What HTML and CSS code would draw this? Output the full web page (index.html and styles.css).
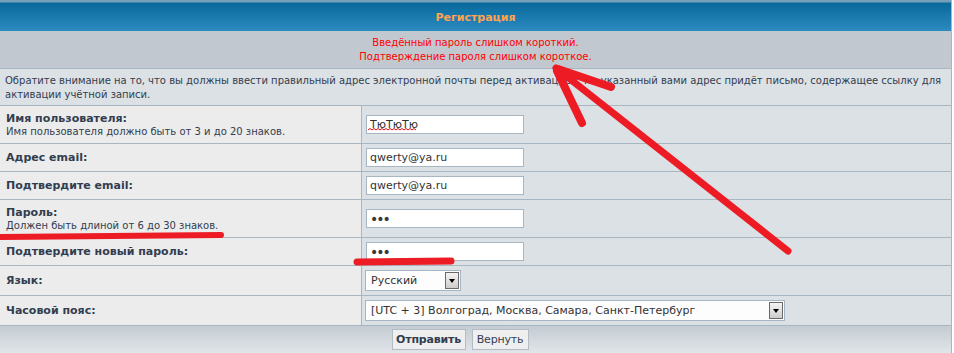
FILE: index.html
```html
<!DOCTYPE html>
<html lang="ru">
<head>
  <meta charset="UTF-8" />
  <meta name="viewport" content="width=device-width, initial-scale=1.0"/>
  <title>Регистрация</title>
  <link rel="stylesheet" href="styles.css">
</head>
<body>
<div class="page">

  <form class="forumline" onsubmit="return false;">
    <div class="thead">Регистрация</div>

    <div class="row-error">
      Введённый пароль слишком короткий.<br>
      Подтверждение пароля слишком короткое.
    </div>

    <div class="row-notice">
      Обратите внимание на то, что вы должны ввести правильный адрес электронной почты перед активацией. На указанный вами адрес придёт письмо, содержащее ссылку для<br>
      активации учётной записи.
    </div>

    <!-- имя пользователя -->
    <div class="field field-tall">
      <div class="field-label">
        <b>Имя пользователя:</b>
        <span class="explain">Имя пользователя должно быть от 3 и до 20 знаков.</span>
      </div>
      <div class="field-input"><input type="text" class="inputbox" value="ТюТюТю"></div>
    </div>

    <div class="field">
      <div class="field-label"><b>Адрес email:</b></div>
      <div class="field-input"><input type="text" class="inputbox" value="qwerty@ya.ru"></div>
    </div>

    <div class="field">
      <div class="field-label"><b>Подтвердите email:</b></div>
      <div class="field-input"><input type="text" class="inputbox" value="qwerty@ya.ru"></div>
    </div>

    <div class="field field-tall">
      <div class="field-label">
        <b>Пароль:</b>
        <span class="explain">Должен быть длиной от 6 до 30 знаков.</span>
      </div>
      <div class="field-input"><input type="password" class="inputbox pass" value="123"></div>
    </div>

    <div class="field">
      <div class="field-label"><b>Подтвердите новый пароль:</b></div>
      <div class="field-input"><input type="password" class="inputbox pass" value="123"></div>
    </div>

    <div class="field field-select">
      <div class="field-label"><b>Язык:</b></div>
      <div class="field-input">
        <span class="select-wrap">
          <select class="select-lang">
            <option>Русский</option>
          </select>
          <span class="drop"></span>
        </span>
      </div>
    </div>

    <div class="field field-select">
      <div class="field-label"><b>Часовой пояс:</b></div>
      <div class="field-input">
        <span class="select-wrap">
          <select class="select-tz">
            <option>[UTC + 3] Волгоград, Москва, Самара, Санкт-Петербург</option>
          </select>
          <span class="drop"></span>
        </span>
      </div>
    </div>

    <div class="buttons">
      <button type="submit" class="btn btn-main">Отправить</button>
      <button type="reset" class="btn btn-lite">Вернуть</button>
    </div>
  </form>

  <!-- красные пометки поверх скриншота -->
  <svg class="scribble" width="954" height="353" viewBox="0 0 954 353">
    <!-- подчёркивание проверки орфографии -->
    <path d="M368 130 l2 -1.5 l2 1.5 l2 -1.5 l2 1.5 l2 -1.5 l2 1.5 l2 -1.5 l2 1.5 l2 -1.5 l2 1.5 l2 -1.5 l2 1.5 l2 -1.5 l2 1.5 l2 -1.5 l2 1.5 l2 -1.5 l2 1.5 l2 -1.5 l2 1.5 l2 -1.5 l2 1.5 l2 -1.5 l2 1.5"
          fill="none" stroke="#e01010" stroke-width="1"/>
    <g fill="none" stroke="#ed1c24" stroke-linecap="round" stroke-linejoin="round">
      <path d="M556 68 L788 251" stroke-width="7"/>
      <path d="M557 71 L582 123" stroke-width="8"/>
      <path d="M558 69 L611 87" stroke-width="8"/>
      <path d="M1 237 L221 235" stroke-width="6"/>
      <path d="M357 262 L451 261" stroke-width="7"/>
    </g>
  </svg>

</div>
</body>
</html>
```

FILE: styles.css
```css
:root {
  --text: #323d4f;
  --row1: #ececec;
  --row2: #dce1e5;
  --row3: #c2c8cf;
  --line: #a8b6c2;
}

* {
  margin: 0;
  padding: 0;
  box-sizing: border-box;
}

body {
  font-family: "DejaVu Sans", Verdana, sans-serif;
  font-size: 11px;
  color: var(--text);
  background: #fff;
}

.page {
  position: relative;
  width: 954px;
  height: 353px;
  overflow: hidden;
}

.forumline {
  width: 952px;
  border-right: 1px solid var(--line);
}

.thead {
  height: 31px;
  padding-top: 4px;
  text-align: center;
  font-weight: bold;
  font-size: 11px;
  line-height: 27px;
  color: #ffa34f;
  background: linear-gradient(#74a0ba 0, #74a0ba 2px, #0a699b 3px, #2b8bc1 100%);
}

.row-error {
  height: 38px;
  padding-top: 5px;
  text-align: center;
  line-height: 14px;
  font-size: 10px;
  color: #ff0000;
  background: var(--row3);
  border-bottom: 1px solid var(--line);
}

.row-notice {
  height: 37px;
  padding: 5px 5px 0;
  line-height: 14px;
  font-size: 10px;
  background: var(--row2);
  border-bottom: 1px solid var(--line);
}

.field {
  display: grid;
  grid-template-columns: 362px 1fr;
  height: 28px;
  border-bottom: 1px solid var(--line);
}

.field-tall {
  height: 38px;
}

.field-select {
  height: 30px;
}

.field-label {
  display: flex;
  flex-direction: column;
  justify-content: center;
  padding-left: 6px;
  background: var(--row1);
  border-right: 1px solid var(--line);
}

.field-label b {
  font-size: 11px;
  line-height: 13px;
}

.explain {
  font-size: 10px;
  line-height: 12px;
  margin-top: 1px;
}

.field-input {
  display: flex;
  align-items: center;
  padding-left: 4px;
  background: var(--row2);
}

.inputbox {
  width: 158px;
  height: 19px;
  padding: 0 3px;
  border: 1px solid var(--line);
  background: #fff;
  color: #333;
  font-family: "DejaVu Sans", Verdana, sans-serif;
  font-size: 11px;
  outline: none;
}

.pass {
  font-size: 14px;
  letter-spacing: -2px;
  color: #3a3a3a;
}

.select-wrap {
  position: relative;
  display: inline-block;
  margin-left: -1px;
}

.select-wrap select {
  appearance: none;
  -webkit-appearance: none;
  display: block;
  height: 21px;
  padding-left: 5px;
  border: 1px solid var(--line);
  background: #fdfdfd;
  color: #333;
  font-family: "DejaVu Sans", Verdana, sans-serif;
  font-size: 11px;
  outline: none;
}

.select-lang {
  width: 96px;
}

.select-tz {
  width: 420px;
}

.drop {
  position: absolute;
  top: 2px;
  right: 2px;
  width: 14px;
  height: 17px;
  border: 1px solid #6a6a6a;
  background: linear-gradient(#f4f4f4, #cdcdcd);
  pointer-events: none;
}

.drop::after {
  content: "";
  position: absolute;
  left: 3px;
  top: 6px;
  border-left: 3px solid transparent;
  border-right: 3px solid transparent;
  border-top: 4px solid #000;
}

.buttons {
  display: flex;
  justify-content: center;
  gap: 6px;
  height: 28px;
  padding: 3px 31px 0 0;
  background: linear-gradient(#c4cbd2, #e2e6ea);
}

.btn {
  height: 21px;
  padding: 0;
  border: 1px solid #b2bcc5;
  background: #efefef;
  color: var(--text);
  font-family: "DejaVu Sans", Verdana, sans-serif;
  font-size: 11px;
  letter-spacing: -0.2px;
  cursor: pointer;
}

.btn-main {
  width: 74px;
  font-weight: bold;
}

.btn-lite {
  width: 57px;
}

.scribble {
  position: absolute;
  top: 0;
  left: 0;
  pointer-events: none;
}
```
